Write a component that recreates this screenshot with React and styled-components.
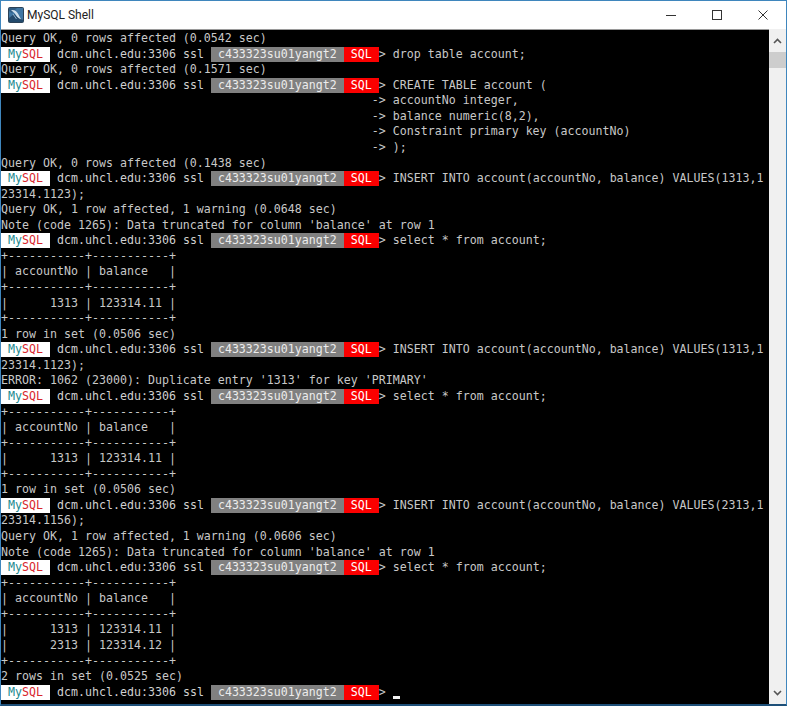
import React from 'react'
import styled, { createGlobalStyle } from 'styled-components'

const GlobalStyle = createGlobalStyle`
  html, body { margin: 0; padding: 0; background: #fff; overflow: hidden; }
`

const Window = styled.div`
  width: 787px;
  height: 706px;
  box-sizing: border-box;
  display: flex;
  flex-direction: column;
  border: 1px solid #3f86bd;
  border-bottom: 2px solid #1d4f78;
  background: #fff;
  overflow: hidden;
`
const TitleBar = styled.div`
  height: 28px;
  flex: none;
  display: flex;
  align-items: center;
  padding-left: 7px;
  background: #fff;
`
const Title = styled.div`
  margin-left: 3px;
  font: 12px Roboto, "Liberation Sans", sans-serif;
  color: #222;
`
const Controls = styled.div`
  margin-left: auto;
  display: flex;
  height: 100%;
  padding-bottom: 1px;
  box-sizing: border-box;
`
const ControlBtn = styled.div`
  width: 46px;
  display: flex;
  align-items: center;
  justify-content: center;
  color: #333;
`
const Body = styled.div`
  flex: 1;
  display: flex;
  min-height: 0;
`
const Terminal = styled.div`
  flex: 1;
  background: #000;
  border-top: 1px solid #9a9a9a;
  padding-top: 1px;
  color: #c8c8c8;
  font-family: "DejaVu Sans Mono", "Liberation Mono", monospace;
  font-size: 11.6px;
  overflow: hidden;
`
const Line = styled.div`
  height: 15.57px;
  line-height: 15.57px;
  white-space: pre;
  letter-spacing: 0.015px;
`
const Seg = styled.span`
  display: inline-block;
  height: 15px;
  line-height: 15px;
  vertical-align: top;
  background: ${p => p.$bg};
  color: ${p => p.$fg};
`
const MyPart = styled.span`
  color: #1c8a8f;
`
const SqlPart = styled.span`
  color: #d8262c;
`
const Cursor = styled.span`
  display: inline-block;
  width: 7px;
  height: 3px;
  background: #f2f2f2;
  vertical-align: -3px;
`
const Scrollbar = styled.div`
  width: 17px;
  flex: none;
  background: #f0f0f0;
  display: flex;
  flex-direction: column;
  align-items: center;
  color: #555;
`
const ScrollBtn = styled.div`
  height: 23px;
  width: 100%;
  flex: none;
  display: flex;
  align-items: center;
  justify-content: center;
`
const Thumb = styled.div`
  width: 100%;
  height: 16px;
  flex: none;
  background: #cdcdcd;
`
const Track = styled.div`
  flex: 1;
`

const AppIcon = () => (
  <svg width="16" height="16" viewBox="0 0 16 16">
    <rect x="0.5" y="0.5" width="15" height="15" rx="1" fill="#3f76a3" stroke="#2b4257" />
    <path d="M1 11 L6 7 L15 13 V15 H1 Z" fill="#234a6c" />
    <path d="M1 1 H9 L4 6 L1 4 Z" fill="#2f5c84" />
    <path d="M3 3 C7 2.5 9 4.5 10.5 7.5 C11.3 9.3 12 10.8 13.5 12.5 C10.8 11.8 9.2 10.4 8.2 8.6 C7 6.5 5.4 5 3 3 Z" fill="#cfe0ec" />
    <path d="M5 7 L8.5 12" stroke="#8fb0c9" strokeWidth="1" />
  </svg>
)

const Prompt = () => (
  <>
    <Seg $bg="#fff"> <MyPart>My</MyPart><SqlPart>SQL</SqlPart> </Seg>
    <Seg $fg="#d0d0d0"> dcm.uhcl.edu:3306 ssl </Seg>
    <Seg $bg="#808080" $fg="#ececec"> c433323su01yangt2 </Seg>
    <Seg $bg="#fb0000" $fg="#fff"> SQL </Seg>
    {'> '}
  </>
)

const sep = '+-----------+-----------+'
const head = '| accountNo | balance   |'
const row1 = '|      1313 | 123314.11 |'
const row2 = '|      2313 | 123314.12 |'
const cont = ' '.repeat(53) + '-> '
const note = "Note (code 1265): Data truncated for column 'balance' at row 1"
const select = 'select * from account;'

// p: line starts with the prompt
const lines = [
  { t: 'Query OK, 0 rows affected (0.0542 sec)' },
  { p: 1, t: 'drop table account;' },
  { t: 'Query OK, 0 rows affected (0.1571 sec)' },
  { p: 1, t: 'CREATE TABLE account (' },
  { t: cont + 'accountNo integer,' },
  { t: cont + 'balance numeric(8,2),' },
  { t: cont + 'Constraint primary key (accountNo)' },
  { t: cont + ');' },
  { t: 'Query OK, 0 rows affected (0.1438 sec)' },
  { p: 1, t: 'INSERT INTO account(accountNo, balance) VALUES(1313,1' },
  { t: '23314.1123);' },
  { t: 'Query OK, 1 row affected, 1 warning (0.0648 sec)' },
  { t: note },
  { p: 1, t: select },
  { t: sep }, { t: head }, { t: sep }, { t: row1 }, { t: sep },
  { t: '1 row in set (0.0506 sec)' },
  { p: 1, t: 'INSERT INTO account(accountNo, balance) VALUES(1313,1' },
  { t: '23314.1123);' },
  { t: "ERROR: 1062 (23000): Duplicate entry '1313' for key 'PRIMARY'" },
  { p: 1, t: select },
  { t: sep }, { t: head }, { t: sep }, { t: row1 }, { t: sep },
  { t: '1 row in set (0.0506 sec)' },
  { p: 1, t: 'INSERT INTO account(accountNo, balance) VALUES(2313,1' },
  { t: '23314.1156);' },
  { t: 'Query OK, 1 row affected, 1 warning (0.0606 sec)' },
  { t: note },
  { p: 1, t: select },
  { t: sep }, { t: head }, { t: sep }, { t: row1 }, { t: row2 }, { t: sep },
  { t: '2 rows in set (0.0525 sec)' },
  { p: 1, t: '', cursor: 1 },
]

export default function App() {
  return (
    <>
      <GlobalStyle />
      <Window>
        <TitleBar>
          <AppIcon />
          <Title>MySQL Shell</Title>
          <Controls>
            <ControlBtn>
              <svg width="10" height="10" viewBox="0 0 10 10"><path d="M0 5.5H10" stroke="currentColor" /></svg>
            </ControlBtn>
            <ControlBtn>
              <svg width="10" height="10" viewBox="0 0 10 10"><rect x="0.5" y="0.5" width="9" height="9" fill="none" stroke="currentColor" /></svg>
            </ControlBtn>
            <ControlBtn>
              <svg width="10" height="10" viewBox="0 0 10 10"><path d="M0.5 0.5L9.5 9.5M9.5 0.5L0.5 9.5" stroke="currentColor" /></svg>
            </ControlBtn>
          </Controls>
        </TitleBar>
        <Body>
          <Terminal>
            {lines.map((l, i) => (
              <Line key={i}>
                {l.p ? <Prompt /> : null}
                {l.t}
                {l.cursor ? <Cursor /> : null}
              </Line>
            ))}
          </Terminal>
          <Scrollbar>
            <ScrollBtn>
              <svg width="9" height="6" viewBox="0 0 9 6"><path d="M1 5L4.5 1.5L8 5" fill="none" stroke="currentColor" strokeWidth="1.6" /></svg>
            </ScrollBtn>
            <Thumb />
            <Track />
            <ScrollBtn>
              <svg width="9" height="6" viewBox="0 0 9 6"><path d="M1 1L4.5 4.5L8 1" fill="none" stroke="currentColor" strokeWidth="1.6" /></svg>
            </ScrollBtn>
          </Scrollbar>
        </Body>
      </Window>
    </>
  )
}
